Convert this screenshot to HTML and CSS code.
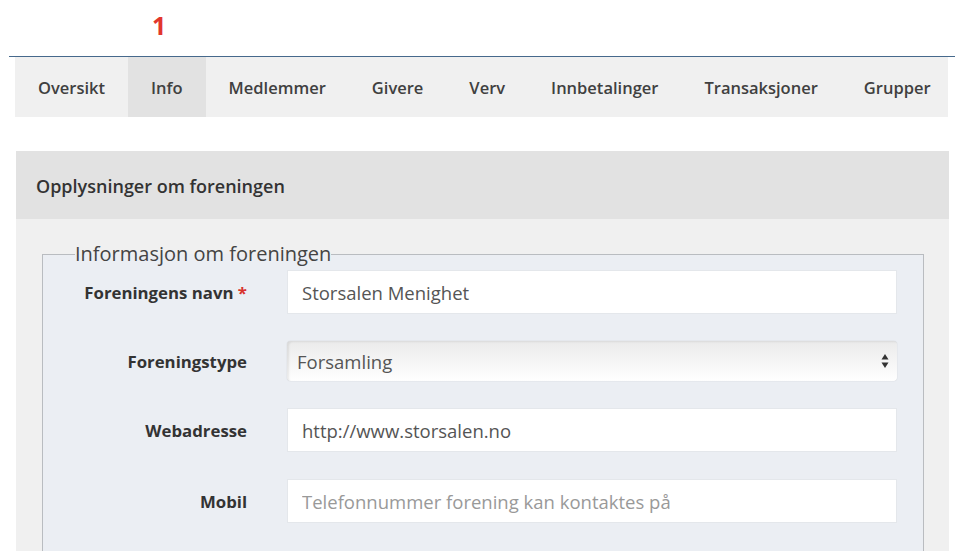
FILE: index.html
```html
<!DOCTYPE html>
<html lang="no">
<head>
  <meta charset="UTF-8" />
  <meta name="viewport" content="width=device-width, initial-scale=1.0"/>
  <title>Opplysninger om foreningen</title>
  <link rel="stylesheet" href="styles.css">
</head>
<body>
  <div class="page">
    <div class="step-header">
      <span class="step-number">1</span>
    </div>

    <nav class="tabs">
      <a class="tab">Oversikt</a>
      <a class="tab active">Info</a>
      <a class="tab">Medlemmer</a>
      <a class="tab">Givere</a>
      <a class="tab">Verv</a>
      <a class="tab">Innbetalinger</a>
      <a class="tab">Transaksjoner</a>
      <a class="tab">Grupper</a>
    </nav>

    <div class="panel">
      <div class="panel-heading">Opplysninger om foreningen</div>
      <div class="panel-body">
        <fieldset class="info-set">
          <legend>Informasjon om foreningen</legend>

          <div class="form-row">
            <label for="navn">Foreningens navn <span class="required">*</span></label>
            <input type="text" id="navn" value="Storsalen Menighet">
          </div>

          <div class="form-row">
            <label for="type">Foreningstype</label>
            <div class="select-wrap">
              <select id="type">
                <option>Forsamling</option>
                <option>Menighet</option>
                <option>Lag</option>
              </select>
              <!-- up/down arrows of the select -->
              <svg class="select-arrows" width="8" height="16" viewBox="0 0 8 16">
                <path d="M4 1 L7.5 6.5 L0.5 6.5 Z" fill="#333"/>
                <path d="M4 15 L7.5 9.5 L0.5 9.5 Z" fill="#333"/>
              </svg>
            </div>
          </div>

          <div class="form-row">
            <label for="web">Webadresse</label>
            <input type="text" id="web" value="http://www.storsalen.no">
          </div>

          <div class="form-row">
            <label for="mobil">Mobil</label>
            <input type="text" id="mobil" placeholder="Telefonnummer forening kan kontaktes på">
          </div>
        </fieldset>
      </div>
    </div>
  </div>
</body>
</html>
```

FILE: styles.css
```css
body {
  margin: 0;
  font-family: 'Open Sans', 'Noto Sans', sans-serif;
  background-color: #fff;
  color: #333;
}

.page {
  padding: 0 5px 0 9px;
}

/* Step number above the tab bar */
.step-header {
  height: 57px;
  border-bottom: 1px solid #46698c;
  padding-left: 143px;
  box-sizing: border-box;
}

.step-number {
  display: inline-block;
  margin-top: 8px;
  font-size: 25px;
  font-weight: 700;
  line-height: 34px;
  color: #e2362c;
}

.tabs {
  display: flex;
  margin: 0 7px 0 6px;
  height: 60px;
  background-color: #f0f0f0;
}

.tab {
  display: flex;
  align-items: center;
  padding: 0 23px;
  font-size: 16.5px;
  font-weight: 600;
  color: #404040;
  cursor: pointer;
}

.tab.active {
  background-color: #e2e2e2;
}

.panel {
  margin: 34px 6px 0 7px;
  background-color: #f0f0f0;
}

.panel-heading {
  height: 68px;
  line-height: 70px;
  padding-left: 20px;
  background-color: #e2e2e2;
  font-size: 18px;
  font-weight: 600;
  color: #333;
}

.panel-body {
  padding: 22px 25px 0 26px;
  height: 310px;
  overflow: hidden;
}

.info-set {
  margin: 0;
  padding: 3px 26px 20px 0;
  border: 1px solid #b9bcc0;
  background-color: #ebeef3;
}

.info-set legend {
  margin-left: 32px;
  padding: 0;
  font-size: 20px;
  line-height: 26px;
  color: #444;
}

.form-row {
  display: grid;
  grid-template-columns: 204px 1fr;
  column-gap: 40px;
  align-items: center;
  margin-bottom: 27px;
}

.form-row label {
  text-align: right;
  font-size: 16.8px;
  font-weight: 700;
  color: #333;
}

.required {
  color: #d8322c;
}

.form-row input {
  height: 44px;
  box-sizing: border-box;
  padding: 0 14px;
  border: 1px solid #e4e7eb;
  background-color: #fff;
  font-family: inherit;
  font-size: 18.5px;
  color: #555;
  outline: none;
}

.form-row input::placeholder {
  color: #999;
}

.select-wrap {
  position: relative;
}

.select-wrap select {
  appearance: none;
  -webkit-appearance: none;
  width: 100%;
  height: 40px;
  padding: 0 10px;
  border: none;
  border-radius: 4px;
  background: linear-gradient(to bottom, #ebebeb, #fff);
  box-shadow: inset 2px 1px 2px rgba(0, 0, 0, 0.08), 0 0 1px rgba(0, 0, 0, 0.25);
  font-family: inherit;
  font-size: 18.5px;
  color: #555;
}

.select-arrows {
  position: absolute;
  right: 8px;
  top: 12px;
  pointer-events: none;
}
```
